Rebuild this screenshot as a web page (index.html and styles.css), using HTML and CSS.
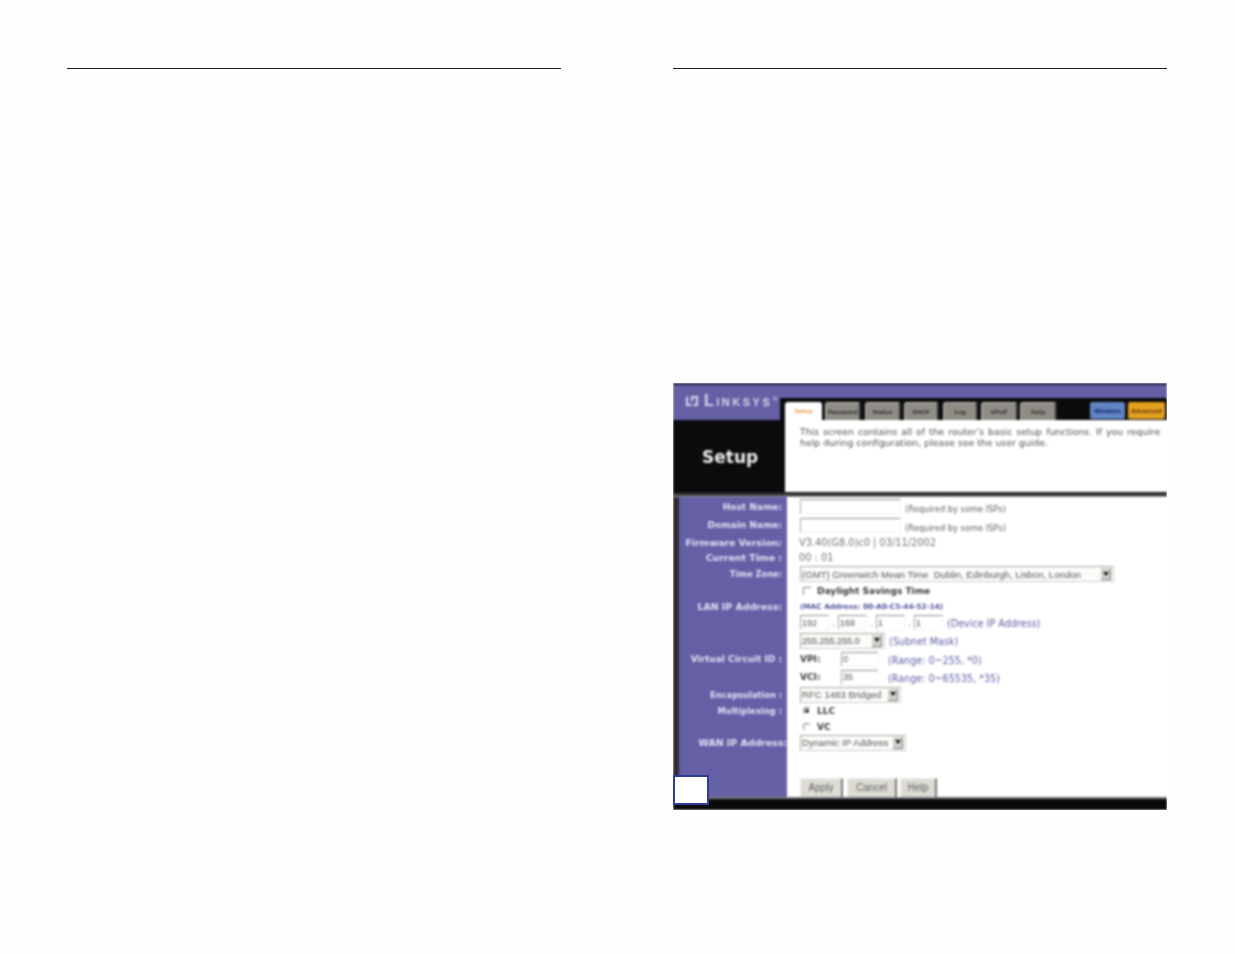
FILE: index.html
```html
<!DOCTYPE html>
<html lang="en">
<head>
<meta charset="utf-8">
<title>Setup</title>
<link rel="stylesheet" href="styles.css">
</head>
<body>
<main class="spread">
  <section class="page"><div class="rule"></div></section>
  <section class="page">
    <div class="rule"></div>
    <figure class="shot">
      <div class="shot-inner">
        <header class="top">
          <div class="brand">
            <svg class="logo-icon" viewBox="0 0 14 12" aria-hidden="true"><path d="M1 1.5V11H6.5V9H3V1.5ZM6 1H13V11H8.5V9H11V3H8V6H6Z" fill="#d8d8ea"/></svg>
            <span class="logo-text">Linksys</span><span class="logo-reg">®</span>
          </div>
          <div class="top-right">
            <div class="band"></div>
            <nav class="tabs">
              <span class="tab tab-active t-setup">Setup</span>
              <span class="tab t-pass">Password</span>
              <span class="tab t-status">Status</span>
              <span class="tab t-dhcp">DHCP</span>
              <span class="tab t-log">Log</span>
              <span class="tab t-upnp">UPnP</span>
              <span class="tab t-help">Help</span>
              <span class="spacer"></span>
              <span class="tab tab-blue">Wireless</span>
              <span class="tab tab-orange">Advanced</span>
            </nav>
          </div>
        </header>
        <div class="hero">
          <div class="hero-title">Setup</div>
          <p class="hero-text"><span class="spread-line">This screen contains all of the router's basic setup functions. If you require</span><br>help during configuration, please see the user guide.</p>
        </div>
        <div class="divider"></div>
        <div class="form">
          <div class="row r19"><label>Host Name:</label><div class="val"><span class="box w101"></span><span class="hint">(Required by some ISPs)</span></div></div>
          <div class="row r18"><label>Domain Name:</label><div class="val"><span class="box w101"></span><span class="hint">(Required by some ISPs)</span></div></div>
          <div class="row r16 low"><label class="wide">Firmware Version:</label><div class="val plain">V3.40(G8.0)c0 | 03/11/2002</div></div>
          <div class="row r15"><label class="wide">Current Time :</label><div class="val plain">00 : 01</div></div>
          <div class="row r18"><label class="thin">Time Zone:</label><div class="val"><span class="sel w314"><span class="sel-text">(GMT) Greenwich Mean Time&nbsp; Dublin, Edinburgh, Lisbon, London</span><span class="arrow"></span></span></div></div>
          <div class="row r15"><label></label><div class="val"><span class="check"></span><b class="strong">Daylight Savings Time</b></div></div>
          <div class="row r16"><label class="wide">LAN IP Address:</label><div class="val mac">(MAC Address: 00-A0-C5-44-52-14)</div></div>
          <div class="row r17"><label></label><div class="val"><span class="box ip">192</span><i class="dot">.</i><span class="box ip">168</span><i class="dot">.</i><span class="box ip">1</span><i class="dot">.</i><span class="box ip">1</span><span class="note n4">(Device IP Address)</span></div></div>
          <div class="row r19"><label></label><div class="val"><span class="sel w85"><span class="sel-text tight">255.255.255.0</span><span class="arrow"></span></span><span class="note n4">(Subnet Mask)</span></div></div>
          <div class="row r18"><label>Virtual Circuit ID :</label><div class="val"><b class="strong lab">VPI:</b><span class="box w37">0</span><span class="note n10">(Range: 0~255, *0)</span></div></div>
          <div class="row r18"><label></label><div class="val"><b class="strong lab">VCI:</b><span class="box w37">35</span><span class="note n10">(Range: 0~65535, *35)</span></div></div>
          <div class="row r17"><label class="thin">Encapsulation :</label><div class="val"><span class="sel w101"><span class="sel-text">RFC 1483 Bridged</span><span class="arrow"></span></span></div></div>
          <div class="row r16"><label class="thin">Multiplexing :</label><div class="val"><span class="radio on"></span><b class="strong">LLC</b></div></div>
          <div class="row r15"><label></label><div class="val"><span class="radio"></span><b class="strong">VC</b></div></div>
          <div class="row r17"><label class="over">WAN IP Address:</label><div class="val"><span class="sel w106"><span class="sel-text">Dynamic IP Address</span><span class="arrow"></span></span></div></div>
          <div class="row grow"><label></label><div class="val actions"><span class="btn b42">Apply</span><span class="btn b50">Cancel</span><span class="btn b37">Help</span></div></div>
        </div>
        <div class="foot"></div>
      </div>
      <div class="page-no"></div>
    </figure>
  </section>
</main>
</body>
</html>
```
FILE: styles.css
```css
* { box-sizing: border-box; }
html, body { margin: 0; background: #fefefe; }
body { width: 1235px; height: 954px; overflow: hidden; font-family: "DejaVu Sans", sans-serif; }
.spread { display: flex; gap: 112px; padding: 68px 0 0 67px; }
.page { width: 494px; }
.rule { height: 1px; background: #1c1c1c; }
.shot { position: relative; margin: 314px 0 0; width: 494px; height: 427px; overflow: hidden; background: #fff; }
.shot-inner { display: flex; flex-direction: column; height: 100%; filter: blur(0.8px); }

.top { display: flex; height: 37px; border-top: 2px solid #1a1738; background: #6560a6; }
.brand { width: 107px; display: flex; align-items: center; padding: 0 0 3px 12px; color: #d8d8ea; }
.logo-icon { width: 14px; height: 12px; margin-right: 5px; }
.logo-text { font-family: "Liberation Sans", sans-serif; font-variant: small-caps; font-weight: bold; font-size: 16px; letter-spacing: 2.5px; line-height: 1; }
.logo-reg { font-size: 6px; margin: -6px 0 0 0; }
.top-right { flex: 1; display: flex; flex-direction: column; }
.band { height: 13px; }
.tabs { flex: 1; display: flex; background: #0b0a0c; padding: 4px 2px 0 5px; }
.tab { height: 18px; display: flex; align-items: center; justify-content: center; font-size: 5.5px; font-weight: bold; color: #333; background: #8f8d85; border-top: 1px solid #c4c2b8; border-left: 1px solid #bbb; border-right: 2px solid #333; border-radius: 3px 3px 0 0; }
.tab-active { background: #fff; color: #e39a4c; border: 0; }
.t-setup { width: 37px; margin-right: 3px; }
.t-pass { width: 36px; margin-right: 4px; }
.t-status { width: 36px; margin-right: 3px; }
.t-dhcp { width: 35px; margin-right: 4px; }
.t-log { width: 35px; margin-right: 3px; }
.t-upnp { width: 37px; margin-right: 2px; }
.t-help { width: 37px; }
.spacer { flex: 1; }
.tab-blue { width: 35px; height: 17px; margin-right: 3px; background: #5f84c0; color: #14206a; border: 0; border-radius: 2px; }
.tab-orange { width: 37px; height: 17px; background: #e2a020; color: #6a3a10; border: 0; border-radius: 2px; }

.hero { display: flex; height: 72px; }
.hero-title { width: 112px; background: #0b0a0c; color: #eeeeee; font-weight: bold; font-size: 17px; line-height: 1; padding: 29px 0 0 29px; }
.hero-text { flex: 1; margin: 0; padding: 6px 0 0 15px; font-size: 9.35px; line-height: 11px; color: #505050; white-space: nowrap; }
.spread-line { word-spacing: 0.9px; }
.divider { height: 5px; background: #3c3a3e; border-top: 1px solid #111; border-bottom: 1px solid #9a98a0; }

.form { flex: 1; display: flex; flex-direction: column; background: linear-gradient(to right, #2e2c30 0 6px, #6560a6 6px 114px, #fff 114px); }
.row { display: flex; align-items: center; }
.row label { width: 109px; flex: none; text-align: right; color: #e0e0f4; font-size: 9px; font-weight: bold; white-space: nowrap; }
.row label.wide { font-size: 9.4px; }
.row label.thin { font-size: 8.3px; }
.row label.over { font-size: 9.4px; transform: translateX(5px); }
.low .val, .low label { padding-top: 1px; }
.val { margin-left: 18px; flex: 1; display: flex; align-items: center; white-space: nowrap; font-size: 8.9px; color: #505050; }
.plain { margin-left: 17px; font-size: 9.8px; color: #747474; }
.r15 { height: 15px; }
.r16 { height: 16px; }
.r17 { height: 17px; }
.r18 { height: 18px; }
.r19 { height: 19px; }
.grow { flex: 1; align-items: flex-end; }

.box { display: flex; align-items: center; height: 15px; padding-left: 1px; font-family: "Liberation Sans", sans-serif; font-size: 9px; color: #555; background: #fff; border-top: 1px solid #8f8f8a; border-left: 1px solid #a5a5a0; border-right: 1px solid #f2f2f0; border-bottom: 1px solid #f2f2f0; }
.w101 { width: 101px; }
.w37 { width: 37px; margin-left: 0; }
.ip { width: 29px; }
.dot { width: 9px; text-align: center; font-style: normal; }
.hint { margin: 5px 0 0 4px; font-size: 8.3px; color: #606060; }
.sel { display: flex; align-items: center; justify-content: space-between; height: 16px; padding: 0 2px 0 1px; font-family: "Liberation Sans", sans-serif; font-size: 9.6px; color: #555; background: #fbfbf9; border: 1px solid #a8a6a0; border-right-color: #ccc; border-bottom-color: #ccc; }
.sel-text { white-space: pre; }
.tight { letter-spacing: -0.3px; }
.arrow { width: 10px; height: 12px; background: #d4d2cb; border-right: 1px solid #777; border-bottom: 1px solid #777; display: flex; align-items: center; justify-content: center; }
.arrow::after { content: ""; border: 3px solid transparent; border-top: 4px solid #111; border-bottom: 0; }
.w314 { width: 314px; }
.w85 { width: 85px; }
.w101.sel { width: 101px; }
.w106 { width: 106px; }
.check { width: 8px; height: 8px; margin: 0 6px 0 3px; border-top: 1px solid #888; border-left: 1px solid #888; background: #fff; }
.radio { width: 8px; height: 8px; margin: 0 6px 0 3px; border-radius: 50%; border: 1px solid transparent; border-top-color: #777; border-left-color: #777; }
.radio.on { background: radial-gradient(circle, #333 0 1.6px, #fff 2.2px); }
.strong { font-size: 9px; font-weight: bold; color: #3a3a3a; }
.lab { width: 41px; }
.mac { font-size: 7.3px; font-weight: bold; color: #5050a0; }
.note { font-size: 9.6px; color: #5c5ca4; margin-top: 2px; }
.n4 { margin-left: 4px; }
.n10 { margin-left: 10px; }
.actions { gap: 4px; align-items: flex-end; }
.btn { height: 19px; padding-bottom: 1px; display: flex; align-items: center; justify-content: center; font-family: "Liberation Sans", sans-serif; font-size: 10px; color: #606060; background: #dddbd3; border-right: 2px solid #777; border-top: 1px solid #eee; border-left: 1px solid #eee; }
.b42 { width: 43px; }
.b50 { width: 50px; }
.b37 { width: 37px; margin-left: -1px; }
.foot { height: 13px; background: #0b0a0c; border-top: 2px solid #77757a; }
.page-no { position: absolute; left: 0; top: 392px; width: 36px; height: 30px; background: #fff; border: 2px solid #2f3d96; }
```
